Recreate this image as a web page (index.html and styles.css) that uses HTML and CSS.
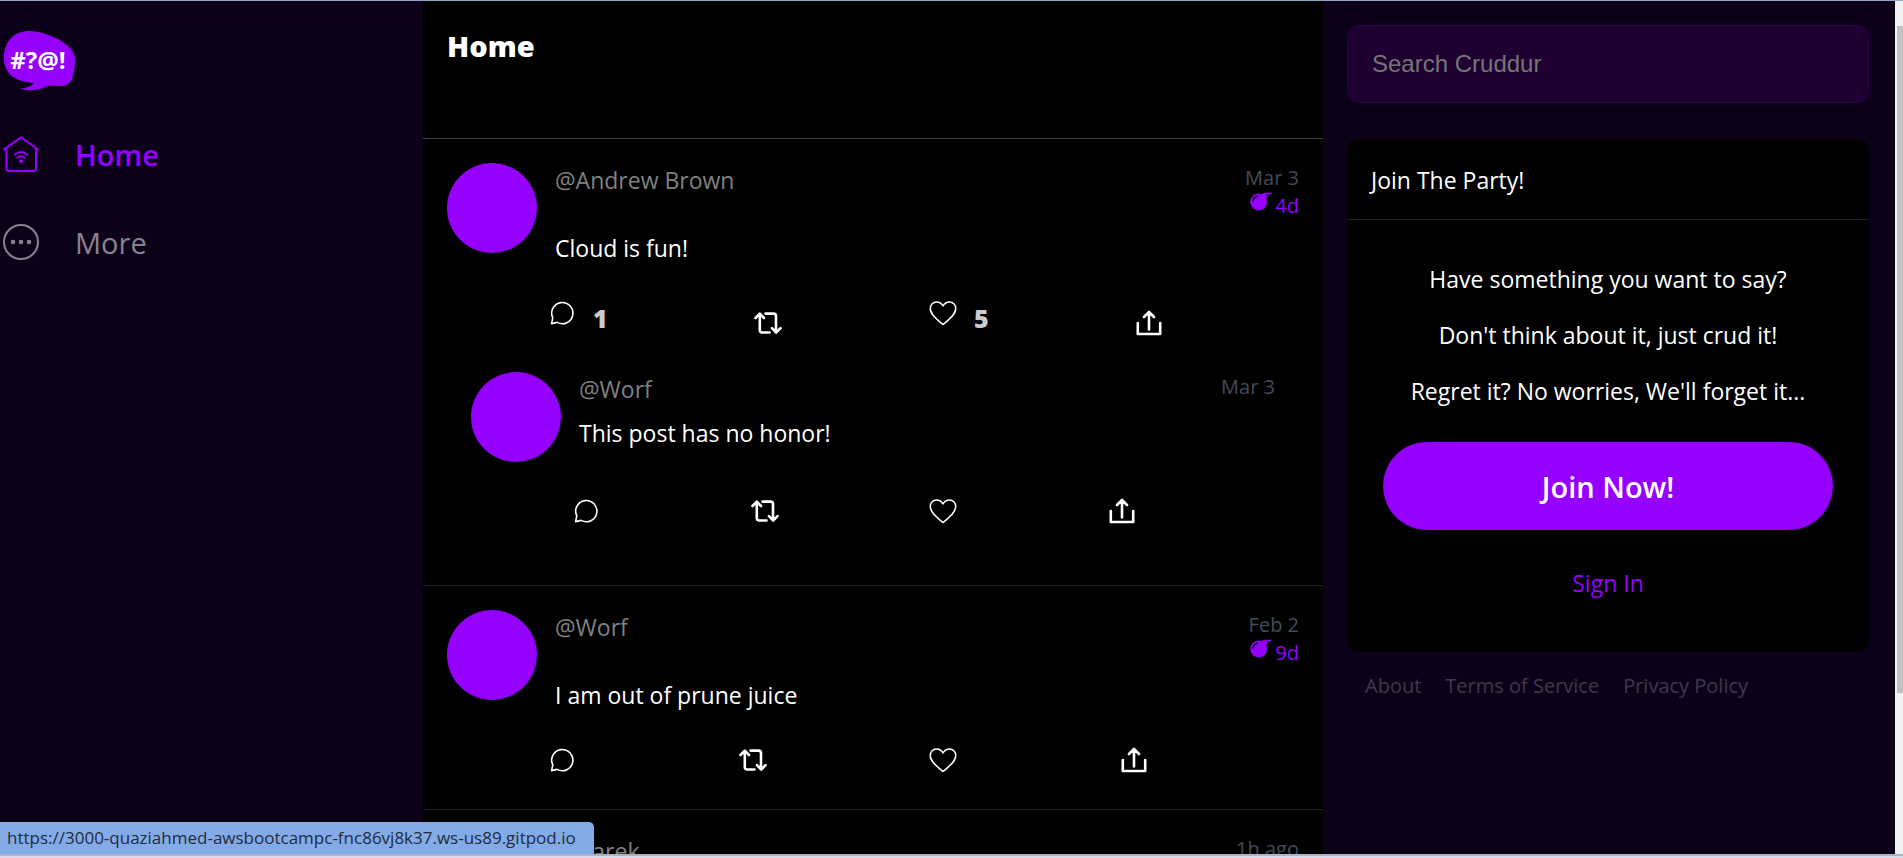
FILE: index.html
```html
<!DOCTYPE html>
<html lang="en">
<head>
<meta charset="utf-8">
<title>Cruddur</title>
<link rel="stylesheet" href="styles.css">
</head>
<body>
<svg class="sprite" aria-hidden="true">
  <symbol id="comment" viewBox="0 0 30 30"><path d="M4.600 25.600L5.800 19.800A10.600 10.600 0 1 1 10.200 24.400Z" fill="none" stroke="currentColor" stroke-width="1.600" stroke-linejoin="round"/></symbol>
  <symbol id="repost" viewBox="0 0 30 30"><g fill="none" stroke="currentColor" stroke-width="2.600" stroke-linecap="round" stroke-linejoin="round"><path d="M2.500 10L6.800 5.600L11 10M6.800 6V22Q6.800 24.500 9.300 24.500H16.500M12.500 5.600H20.500Q23 5.600 23 8V24M19 20.200L23.200 24.500L27.500 20.200"/></g></symbol>
  <symbol id="heart" viewBox="0 0 30 30"><path d="M15 26.500C10 22.300 2.300 17 2.300 10.500C2.300 6.500 5.200 4 8.500 4C11.500 4 13.800 5.800 15 8C16.200 5.800 18.500 4 21.500 4C24.800 4 27.700 6.500 27.700 10.500C27.700 17 20 22.300 15 26.500Z" fill="none" stroke="currentColor" stroke-width="1.500" stroke-linejoin="round"/></symbol>
  <symbol id="share" viewBox="0 0 30 30"><g fill="none" stroke="currentColor" stroke-width="2.600" stroke-linecap="round" stroke-linejoin="round"><path d="M3.800 15V26H26.200V15M15 21.500V4.500M10 9L15 4L20 9"/></g></symbol>
  <symbol id="bomb" viewBox="0 0 22 19"><circle cx="8.700" cy="10" r="8.400" fill="currentColor"/><path d="M12 2L14.500 0.500L17.500 4L16 6.500Z" fill="currentColor"/><path d="M15.500 3Q16.500 .8 18.500 1.400T21 1.200" fill="none" stroke="currentColor" stroke-width="1.600" stroke-linecap="round"/><path d="M3.200 9Q3.500 5.300 7.500 4" fill="none" stroke="#000" stroke-width="1.500" stroke-linecap="round"/></symbol>
</svg>
<main class="layout">
  <nav class="sidebar">
    <svg class="logo" viewBox="0 0 72 60" role="img" aria-label="Cruddur">
      <path d="M0 27C0 10 10 0 26 0C38 0 70 11 71 27C71 40 69 50 64 53C59 56 52 55 45 54.500C36 59 25 61 16 57.500C23 57 27 56 30 52C12 51 0 43 0 27Z" fill="#9500ff"/>
      <text class="logo-text" x="34" y="38" text-anchor="middle">#?@!</text>
    </svg>
    <a class="nav-item active" href="#">
      <svg viewBox="0 0 36 36" fill="none" stroke="currentColor" stroke-width="2" stroke-linecap="round" stroke-linejoin="round"><path d="M1 13.500L18 1.300L35 13.500M3.500 12V32.500Q3.500 35 6 35H30.500Q33 35 33 32.500V12M12 18.500Q18 13.500 24 18.500M14.500 21.800Q18 18.800 21.500 21.800"/><circle cx="18" cy="25.300" r="1" fill="currentColor"/></svg>
      <span>Home</span>
    </a>
    <a class="nav-item" href="#">
      <svg viewBox="0 0 36 36"><circle cx="18" cy="18" r="17" fill="none" stroke="currentColor" stroke-width="2"/><g fill="currentColor"><circle cx="10" cy="18" r="2.300"/><circle cx="18" cy="18" r="2.300"/><circle cx="26" cy="18" r="2.300"/></g></svg>
      <span>More</span>
    </a>
  </nav>

  <section class="feed">
    <header class="feed-head"><h1>Home</h1></header>

    <article class="post">
      <div class="post-main">
        <div class="avatar"></div>
        <div class="content">
          <div class="meta"><span class="handle">@Andrew Brown</span><div class="times"><span>Mar 3</span><span class="expires"><svg><use href="#bomb"/></svg>4d</span></div></div>
          <p class="message">Cloud is fun!</p>
        </div>
      </div>
      <div class="actions">
        <button class="counted" aria-label="Reply"><svg><use href="#comment"/></svg><span>1</span></button>
        <button aria-label="Repost"><svg><use href="#repost"/></svg></button>
        <button class="counted" aria-label="Like"><svg><use href="#heart"/></svg><span>5</span></button>
        <button aria-label="Share"><svg><use href="#share"/></svg></button>
      </div>
      <article class="reply">
        <div class="post-main">
          <div class="avatar"></div>
          <div class="content">
            <div class="meta"><span class="handle">@Worf</span><div class="times"><span>Mar 3</span></div></div>
            <p class="message">This post has no honor!</p>
          </div>
        </div>
        <div class="actions">
          <button aria-label="Reply"><svg><use href="#comment"/></svg></button>
          <button aria-label="Repost"><svg><use href="#repost"/></svg></button>
          <button aria-label="Like"><svg><use href="#heart"/></svg></button>
          <button aria-label="Share"><svg><use href="#share"/></svg></button>
        </div>
      </article>
    </article>

    <article class="post">
      <div class="post-main">
        <div class="avatar"></div>
        <div class="content">
          <div class="meta"><span class="handle">@Worf</span><div class="times"><span>Feb 2</span><span class="expires"><svg><use href="#bomb"/></svg>9d</span></div></div>
          <p class="message">I am out of prune juice</p>
        </div>
      </div>
      <div class="actions">
        <button aria-label="Reply"><svg><use href="#comment"/></svg></button>
        <button aria-label="Repost"><svg><use href="#repost"/></svg></button>
        <button aria-label="Like"><svg><use href="#heart"/></svg></button>
        <button aria-label="Share"><svg><use href="#share"/></svg></button>
      </div>
    </article>

    <article class="post">
      <div class="post-main">
        <div class="avatar"></div>
        <div class="content">
          <div class="meta"><span class="handle">@Garek</span><div class="times"><span>1h ago</span></div></div>
        </div>
      </div>
    </article>
  </section>

  <aside class="side">
    <input class="search" type="text" placeholder="Search Cruddur" aria-label="Search Cruddur">
    <section class="card">
      <h2>Join The Party!</h2>
      <div class="card-body">
        <p>Have something you want to say?</p>
        <p>Don't think about it, just crud it!</p>
        <p>Regret it? No worries, We'll forget it...</p>
        <a class="join" href="#">Join Now!</a>
        <a class="signin" href="#">Sign In</a>
      </div>
    </section>
    <footer class="links"><a href="#">About</a><a href="#">Terms of Service</a><a href="#">Privacy Policy</a></footer>
  </aside>

  <div class="scrollbar"><div class="thumb"></div></div>
</main>
<div class="status">https://3000-quaziahmed-awsbootcampc-fnc86vj8k37.ws-us89.gitpod.io</div>
</body>
</html>
```
FILE: styles.css
```css
* { box-sizing: border-box; }
body {
  margin: 0;
  height: 100vh;
  display: flex;
  flex-direction: column;
  overflow: hidden;
  border-top: 1px solid #94a7c2;
  border-bottom: 2px solid #d8daec;
  background: #0d011a;
  color: #fff;
  font: 23px/32px "Open Sans", "Noto Sans", sans-serif;
}
a { color: inherit; text-decoration: none; }
h1, h2, p { margin: 0; font-weight: 400; }
.sprite { position: absolute; width: 0; height: 0; }
.layout {
  flex: 1;
  min-height: 0;
  overflow: hidden;
  display: grid;
  grid-template-columns: minmax(0, 423fr) 900px minmax(0, 572fr) 8px;
  border-bottom: 2px solid #b0b2c0;
}

.sidebar { padding: 30px 0 0 3px; }
.logo { display: block; width: 72px; height: 60px; margin: 0 0 19px 1px; }
.logo-text { font: 700 24px "Open Sans", sans-serif; fill: #fff; }
.nav-item {
  display: flex;
  align-items: center;
  gap: 36px;
  height: 88px;
  font-size: 29px;
  line-height: 40px;
  color: #8a8290;
}
.nav-item svg { width: 36px; height: 36px; }
.nav-item span { padding-top: 2px; }
.nav-item.active { color: #9500ff; font-weight: 600; }

.feed { background: #000; min-height: 0; overflow: hidden; }
.feed-head { height: 138px; padding: 24px; border-bottom: 1px solid #3a3f4b; }
.feed-head h1 { font-size: 29px; line-height: 42px; font-weight: 800; }
.post { padding: 24px; border-bottom: 1px solid #1d212b; }
.post-main { display: flex; gap: 18px; padding-bottom: 24px; }
.avatar { flex: none; width: 90px; height: 90px; border-radius: 50%; background: #9500ff; }
.content { flex: 1; display: flex; flex-direction: column; gap: 12px; padding-top: 1px; }
.meta { display: flex; justify-content: space-between; align-items: flex-start; }
.handle { color: #808080; }
.times {
  display: flex;
  flex-direction: column;
  align-items: flex-end;
  font-size: 20px;
  line-height: 28px;
  color: #444a5a;
}
.expires { display: flex; gap: 3px; color: #9500ff; }
.expires svg { width: 22px; height: 19px; }
.actions { display: flex; align-items: flex-end; margin-left: 90px; }
.actions button {
  flex: 1 1 auto;
  display: flex;
  align-items: flex-start;
  height: 50px;
  padding: 10px;
  border: 0;
  background: none;
  color: #fff;
  font: inherit;
}
.actions svg { width: 30px; height: 30px; flex: none; }
.actions button.counted { height: 60px; }
.counted span {
  margin-left: 16px;
  font-size: 25px;
  line-height: 40px;
  font-weight: 800;
  color: #ccc;
}
.reply { padding: 24px 24px 25px; }

.side { padding: 24px 26px 0 24px; min-width: 0; }
.search {
  display: block;
  width: 100%;
  height: 78px;
  padding: 0 24px;
  border: 1px solid #26004a;
  border-radius: 12px;
  background: #1f0033;
  color: #fff;
  font: 24px "Liberation Sans", Arial, sans-serif;
}
.search::placeholder { color: #757575; opacity: 1; }
.card { margin-top: 36px; border-radius: 12px; background: #000; }
.card h2 {
  padding: 25px 24px 23px;
  border-bottom: 1px solid #1d212b;
  font-size: 23px;
  line-height: 32px;
}
.card-body { padding: 43px 36px 53px; text-align: center; }
.card-body p { margin-bottom: 24px; white-space: nowrap; }
.join, .signin { display: block; }
.join {
  margin: 35px 0 37px;
  padding: 25px 24px 23px;
  border-radius: 44px;
  background: #9500ff;
  font-size: 29px;
  line-height: 40px;
  font-weight: 600;
}
.signin { color: #9500ff; }
.links {
  display: flex;
  gap: 24px;
  padding: 20px 18px;
  font-size: 20px;
  line-height: 28px;
  color: #40384a;
}

.scrollbar { padding-top: 25px; background: #f1f1f1; }
.thumb { height: 80.5%; margin-left: 2px; background: #c1c1c1; }

.status {
  position: absolute;
  left: 0;
  bottom: 4px;
  padding: 0 18px 0 7px;
  border-top-right-radius: 5px;
  background: #82abe8;
  color: #222c3c;
  font-size: 17px;
  line-height: 32px;
}
```
